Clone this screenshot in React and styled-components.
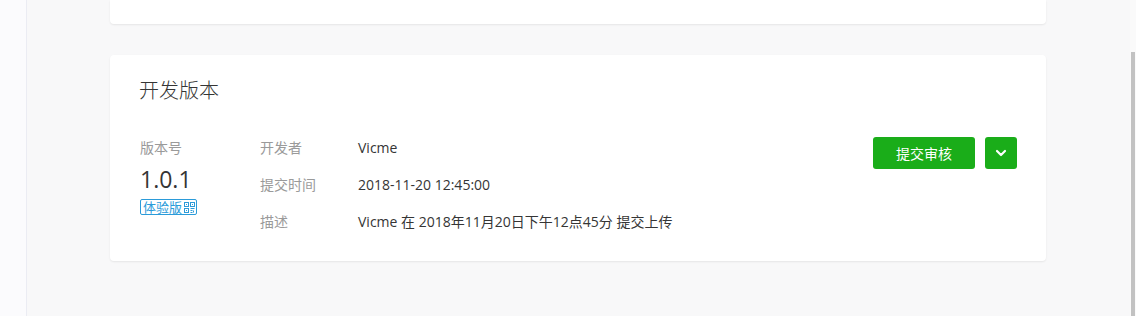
import React from 'react';
import styled, { createGlobalStyle } from 'styled-components';

const GlobalStyle = createGlobalStyle`
  html, body {
    margin: 0;
    padding: 0;
    background: #f8f8f9;
    font-family: "Open Sans", "Noto Sans CJK SC", sans-serif;
    overflow: hidden;
  }
`;

const Page = styled.div`
  display: flex;
  height: 316px;
  background: #f8f8f9;
`;

const Sidebar = styled.div`
  width: 26px;
  flex: none;
  background: #fbfbfd;
  border-right: 1px solid #ebecf3;
`;

const Main = styled.div`
  flex: 1;
  display: flex;
  flex-direction: column;
  gap: 31px;
  padding: 0 84px 0 83px;
`;

const Card = styled.div`
  background: #fff;
  border-radius: ${props => (props.cut ? '0 0 4px 4px' : '4px')};
  box-shadow: 0 1px 2px rgba(0, 0, 0, 0.08);
`;

const CutCard = styled(Card)`
  height: 24px;
`;

const VersionCard = styled(Card)`
  padding: 22px 29px 29px 29px;
`;

const Title = styled.h2`
  margin: 0;
  font-size: 20px;
  line-height: 28px;
  font-weight: 300;
  color: #353535;
`;

const Body = styled.div`
  display: flex;
  align-items: flex-start;
  margin-top: 33px;
  padding-left: 1px;
`;

const VersionColumn = styled.div`
  width: 120px;
  display: flex;
  flex-direction: column;
  align-items: flex-start;
`;

const Label = styled.div`
  font-size: 14px;
  line-height: 20px;
  color: #9a9a9a;
  width: ${props => props.width || 'auto'};
  flex: none;
`;

const VersionNumber = styled.div`
  font-size: 23px;
  line-height: 30px;
  color: #353535;
  margin-top: 6px;
`;

const Tag = styled.span`
  display: inline-flex;
  align-items: center;
  gap: 2px;
  margin-top: 5px;
  height: 14px;
  padding: 0 1px 0 2px;
  border: 1px solid #2b9bd9;
  border-radius: 2px;
  font-size: 13px;
  line-height: 14px;
  color: #2b9bd9;
`;

const Details = styled.div`
  flex: 1;
  display: flex;
  flex-direction: column;
  gap: 17px;
`;

const Row = styled.div`
  display: flex;
  align-items: center;
`;

const Value = styled.div`
  font-size: 14px;
  line-height: 20px;
  color: #353535;
`;

const Actions = styled.div`
  display: flex;
  gap: 10px;
  margin-top: -1px;
`;

const GreenButton = styled.button`
  display: flex;
  align-items: center;
  justify-content: center;
  height: 32px;
  width: ${props => props.width};
  padding: 0;
  border: none;
  border-radius: 3px;
  background: #1aad19;
  color: #fff;
  font-family: inherit;
  font-size: 14px;
  cursor: pointer;
`;

const ScrollTrack = styled.div`
  width: 6px;
  flex: none;
  display: flex;
  justify-content: center;
  background: #fafafa;
`;

const ScrollThumb = styled.div`
  width: 4px;
  margin-top: 52px;
  height: 264px;
  background: #c2c2c2;
`;

const QrIcon = () => (
  <svg width="11" height="11" viewBox="0 0 11 11" fill="none" stroke="currentColor" strokeWidth="1">
    <rect x="0.5" y="0.5" width="4" height="4" />
    <rect x="6.5" y="0.5" width="4" height="4" />
    <rect x="0.5" y="6.5" width="4" height="4" />
    <rect x="2" y="2" width="1" height="1" fill="currentColor" stroke="none" />
    <rect x="8" y="2" width="1" height="1" fill="currentColor" stroke="none" />
    <rect x="2" y="8" width="1" height="1" fill="currentColor" stroke="none" />
    <path d="M6.5 6.5h4M6.5 8.5h2M9.5 8.5v2M6.5 10.5h2" />
  </svg>
);

const ChevronIcon = () => (
  <svg width="12" height="8" viewBox="0 0 12 8" fill="none" stroke="#fff" strokeWidth="2.2" strokeLinecap="round" strokeLinejoin="round">
    <polyline points="2,2 6,6 10,2" />
  </svg>
);

const details = [
  { label: '开发者', value: 'Vicme' },
  { label: '提交时间', value: '2018-11-20 12:45:00' },
  { label: '描述', value: 'Vicme 在 2018年11月20日下午12点45分 提交上传' },
];

const App = () => (
  <>
    <GlobalStyle />
    <Page>
      <Sidebar />
      <Main>
        <CutCard cut />
        <VersionCard>
          <Title>开发版本</Title>
          <Body>
            <VersionColumn>
              <Label>版本号</Label>
              <VersionNumber>1.0.1</VersionNumber>
              <Tag>
                体验版
                <QrIcon />
              </Tag>
            </VersionColumn>
            <Details>
              {details.map(item => (
                <Row key={item.label}>
                  <Label width="98px">{item.label}</Label>
                  <Value>{item.value}</Value>
                </Row>
              ))}
            </Details>
            <Actions>
              <GreenButton width="102px">提交审核</GreenButton>
              <GreenButton width="32px">
                <ChevronIcon />
              </GreenButton>
            </Actions>
          </Body>
        </VersionCard>
      </Main>
      <ScrollTrack>
        <ScrollThumb />
      </ScrollTrack>
    </Page>
  </>
);

export default App;
